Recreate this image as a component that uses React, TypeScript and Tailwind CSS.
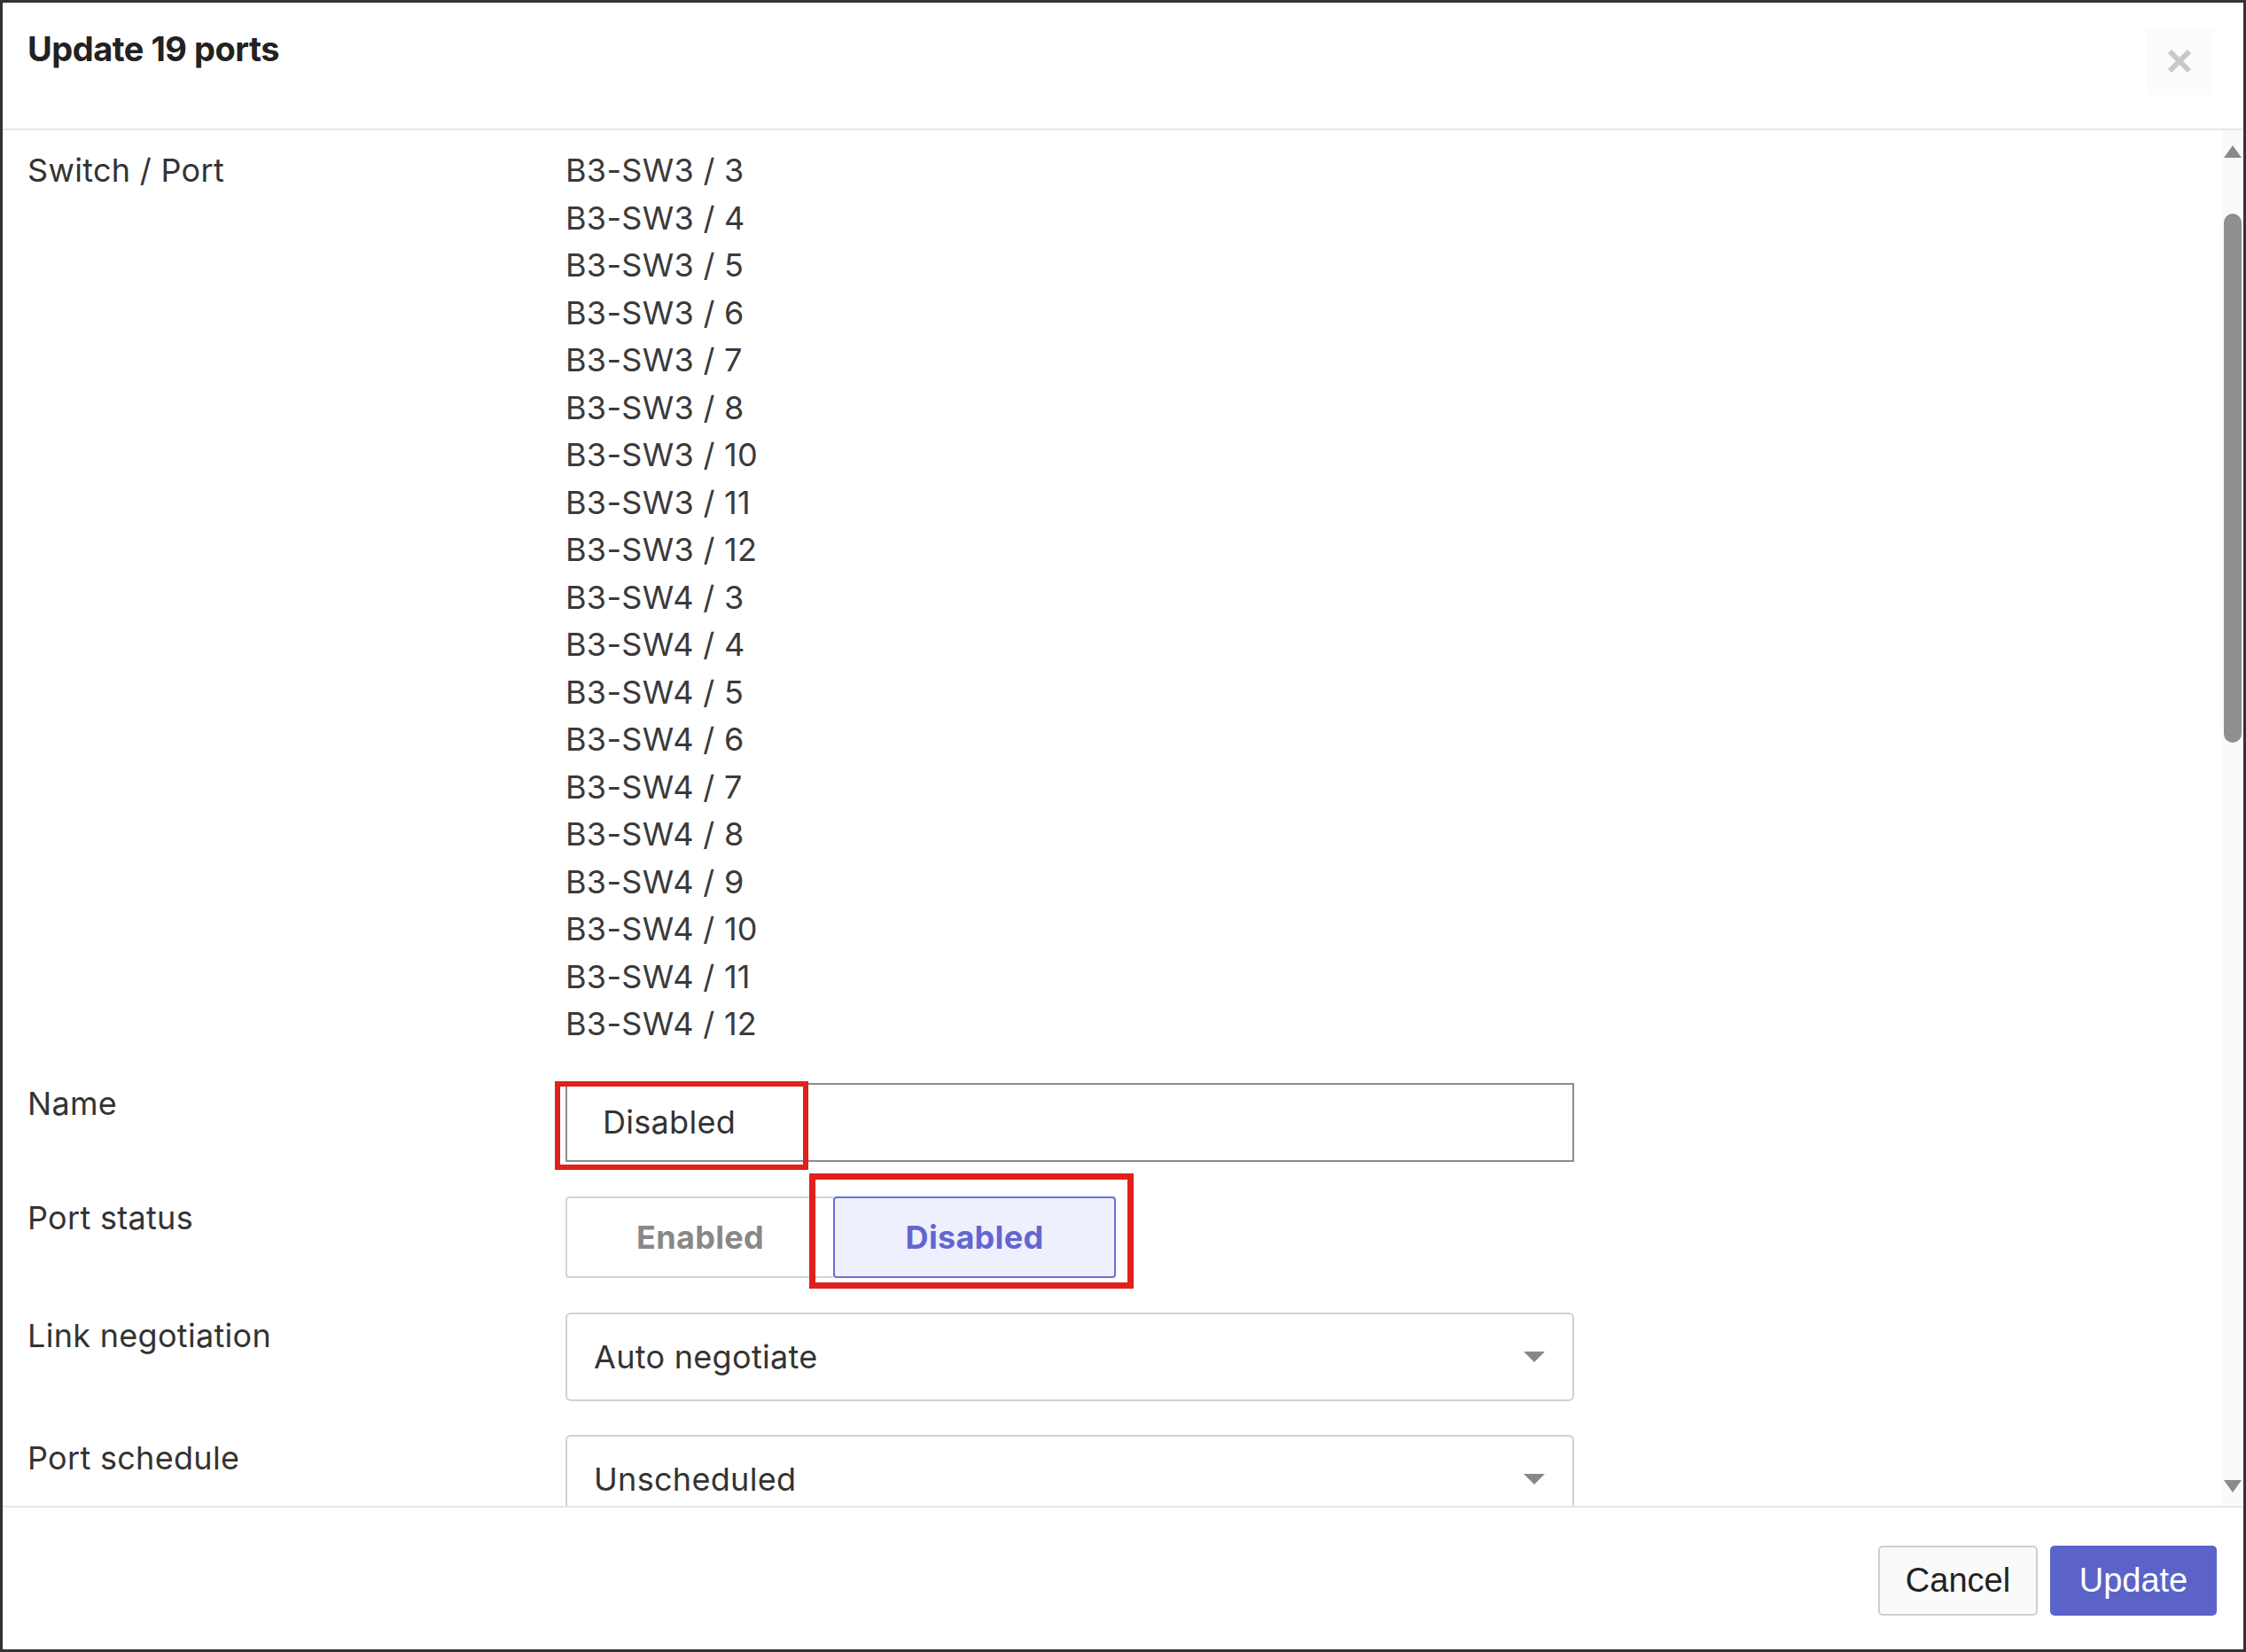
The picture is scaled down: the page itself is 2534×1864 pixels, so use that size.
import React from "react";

const ports = [
  "B3-SW3 / 3","B3-SW3 / 4","B3-SW3 / 5","B3-SW3 / 6","B3-SW3 / 7","B3-SW3 / 8","B3-SW3 / 10","B3-SW3 / 11","B3-SW3 / 12",
  "B3-SW4 / 3","B3-SW4 / 4","B3-SW4 / 5","B3-SW4 / 6","B3-SW4 / 7","B3-SW4 / 8","B3-SW4 / 9","B3-SW4 / 10","B3-SW4 / 11","B3-SW4 / 12",
];

function Caret() {
  return (
    <svg width="26" height="16" viewBox="0 0 26 16"><path d="M1 2 H25 L13 14 Z" fill="#888" /></svg>
  );
}

export default function App() {
  return (
    <div className="w-[2534px] h-[1864px] border-[3px] border-[#333] bg-white flex flex-col text-[#333] overflow-hidden" style={{ fontFamily: "Inter, 'Noto Sans', sans-serif" }}>
      <div className="h-[144px] shrink-0 border-b-2 border-[#e6e6e6] flex items-start justify-between pl-[28px] pr-[34px]">
        <div className="mt-[24px] text-[38px] font-bold text-[#222] tracking-[-0.5px]">Update 19 ports</div>
        <div className="mt-[28px] w-[76px] h-[76px] bg-[#fcfcfc] flex items-center justify-center">
          <svg width="30" height="30" viewBox="0 0 30 30"><path d="M4 4 L26 26 M26 4 L4 26" stroke="#c8c8c8" strokeWidth="6" /></svg>
        </div>
      </div>
      <div className="flex-1 flex overflow-hidden">
        <div className="flex-1 overflow-hidden pl-[28px] text-[36px] tracking-[0.3px]">
          <div className="grid grid-cols-[607px_1fr] pt-[19px]">
            <div className="leading-[53.5px] text-[#333]">Switch / Port</div>
            <div className="leading-[53.5px] text-[#3a3a3a]">
              {ports.map((p) => <div key={p}>{p}</div>)}
            </div>

            <div className="pt-[36px] leading-[53px]">Name</div>
            <div className="pt-[39px]">
              <div className="relative w-[1138px] h-[89px] border-2 border-[#8c8c8c] flex items-center pl-[40px] text-[36px] text-[#333]">
                Disabled
                <div className="absolute left-[-14px] top-[-4px] w-[286px] h-[100px] border-[6px] border-[#e0201b]" />
              </div>
            </div>

            <div className="pt-[37px] leading-[53px]">Port status</div>
            <div className="pt-[39px]">
              <div className="relative flex h-[92px] w-[621px]">
                <div className="w-[302px] h-full border-2 border-r-0 border-[#d4d4d4] rounded-l-[4px] flex items-center justify-center font-bold text-[#888] text-[36px]">Enabled</div>
                <div className="w-[319px] h-full border-2 border-[#6b6fd6] rounded-[4px] bg-[#eef0fd] flex items-center justify-center font-bold text-[#6466d0] text-[36px]">Disabled</div>
                <div className="absolute left-[275px] top-[-26px] w-[366px] h-[130px] border-[7px] border-[#e0201b]" />
              </div>
            </div>

            <div className="pt-[39px] leading-[53px]">Link negotiation</div>
            <div className="pt-[39px]">
              <div className="w-[1138px] h-[100px] border-2 border-[#d0d0d0] rounded-[6px] flex items-center justify-between pl-[30px] pr-[30px] text-[36px] text-[#333]">
                <span>Auto negotiate</span><Caret />
              </div>
            </div>

            <div className="pt-[38px] leading-[53px]">Port schedule</div>
            <div className="pt-[38px]">
              <div className="w-[1138px] h-[100px] border-2 border-[#d0d0d0] rounded-[6px] flex items-center justify-between pl-[30px] pr-[30px] text-[36px] text-[#333]">
                <span>Unscheduled</span><Caret />
              </div>
            </div>
          </div>
        </div>
        <div className="w-[24px] shrink-0 bg-[#fafafa] flex flex-col items-center pt-[14px] pb-[12px]">
          <svg width="22" height="18" viewBox="0 0 22 18"><path d="M1 17 L11 3 L21 17 Z" fill="#8a8a8a" /></svg>
          <div className="mt-[62px] w-[20px] h-[597px] rounded-[10px] bg-[#8f8f8f]" />
          <div className="flex-1" />
          <svg width="22" height="18" viewBox="0 0 22 18"><path d="M1 1 L21 1 L11 15 Z" fill="#8a8a8a" /></svg>
        </div>
      </div>
      <div className="h-[162px] shrink-0 border-t-2 border-[#e6e6e6] flex items-start justify-end gap-[14px] pr-[30px] pt-[43px]" style={{ fontFamily: "'Liberation Sans', Arial, sans-serif" }}>
        <div className="w-[180px] h-[79px] border-2 border-[#cfcfcf] rounded-[5px] bg-[#fafafa] flex items-center justify-center text-[38px] text-[#222]">Cancel</div>
        <div className="w-[188px] h-[79px] rounded-[5px] bg-[#5b63c9] flex items-center justify-center text-[38px] text-white">Update</div>
      </div>
    </div>
  );
}
